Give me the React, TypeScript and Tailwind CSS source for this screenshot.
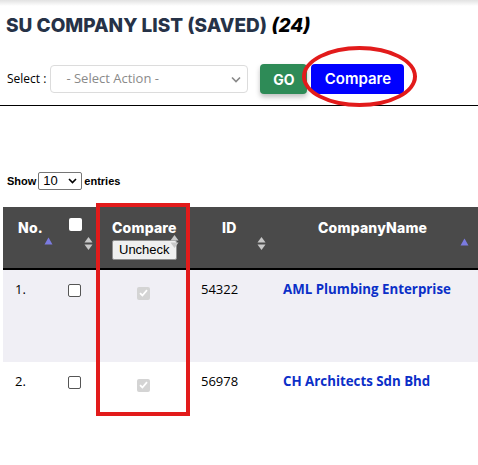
import { FC } from 'react';

const rows = [
  { no: '1.', id: '54322', name: 'AML Plumbing Enterprise', tall: true },
  { no: '2.', id: '56978', name: 'CH Architects Sdn Bhd', tall: false },
];

const SortBoth: FC = () => (
  <svg width="9" height="15" viewBox="0 0 9 15" className="inline-block">
    <path d="M4.5 1 L8.5 6.5 L0.5 6.5 Z" fill="#c8c8c8" />
    <path d="M4.5 14 L8.5 8.5 L0.5 8.5 Z" fill="#c8c8c8" />
  </svg>
);

const SortUp: FC = () => (
  <svg width="9" height="8" viewBox="0 0 9 8" className="inline-block">
    <path d="M4.5 0.5 L8.5 7.5 L0.5 7.5 Z" fill="#7b7be0" />
  </svg>
);

const DisabledCheck: FC = () => (
  <span className="inline-flex h-[13px] w-[13px] items-center justify-center rounded-[2px] bg-[#d4d4d4]">
    <svg width="9" height="8" viewBox="0 0 9 8">
      <path d="M1 4.2 L3.4 6.5 L8 1.2" stroke="#ffffff" strokeWidth="1.8" fill="none" />
    </svg>
  </span>
);

const EmptyCheck: FC = () => (
  <span className="inline-block h-[13px] w-[13px] rounded-[2px] border border-[#555] bg-white" />
);

export default function App() {
  return (
    <div className="relative h-[465px] w-[478px] overflow-hidden bg-white font-['Open_Sans',sans-serif] text-black">
      {/* top shadow */}
      <div className="h-[6px] bg-gradient-to-b from-[#e2e2e2] to-white" />

      {/* Title */}
      <h1 className="mt-[6px] pl-[6px] font-['Inter',sans-serif] text-[19px] leading-[28px] font-extrabold text-[#263247]">
        SU COMPANY LIST (SAVED) <i className="text-black">(24)</i>
      </h1>

      {/* Action row */}
      <div className="mt-[24px] flex items-center pl-[7px]">
        <span className="text-[12px]">Select :</span>
        <div className="ml-[4px] flex h-[28px] w-[198px] items-center justify-between rounded-[4px] border border-[#dcdcdc] pl-[15px] pr-[6px] text-[13px] text-[#8a8a8a]">
          <span>- Select Action -</span>
          <svg width="10" height="7" viewBox="0 0 10 7">
            <path d="M1 1.5 L5 5.5 L9 1.5" stroke="#888" strokeWidth="1.6" fill="none" />
          </svg>
        </div>
        <button className="ml-[12px] h-[30px] w-[47px] rounded-[4px] bg-[#2e8b57] font-['Inter',sans-serif] text-[14px] font-bold text-white shadow-[0_3px_5px_rgba(0,0,0,0.25)]">
          GO
        </button>
        <button className="ml-[4px] h-[30px] w-[93px] rounded-[4px] bg-[#0000ff] font-['Inter',sans-serif] text-[15px] font-semibold text-white">
          Compare
        </button>
      </div>

      <div className="mt-[11px] h-px bg-black" />

      {/* Show entries */}
      <div className="mt-[66px] flex items-center pl-[7px] font-['Liberation_Sans',sans-serif] text-[11px] font-bold">
        <span>Show</span>
        <div className="mx-[2px] flex h-[18px] w-[44px] items-center justify-between rounded-[2px] border border-[#767676] pl-[4px] pr-[4px] text-[13px] font-normal">
          <span>10</span>
          <svg width="9" height="6" viewBox="0 0 9 6">
            <path d="M1 1 L4.5 4.5 L8 1" stroke="#000" strokeWidth="1.6" fill="none" />
          </svg>
        </div>
        <span>entries</span>
      </div>

      {/* Table */}
      <div className="ml-[3px] mt-[17px] w-[500px]">
        <div className="flex h-[63px] border-b-2 border-black bg-[#4a4a4a] font-['Inter',sans-serif] text-[14px] font-extrabold tracking-[0.2px] text-white">
          <div className="flex w-[57px] items-start pl-[15px] pt-[10px]">
            <span>No.</span>
            <span className="ml-[1px] mt-[12px]"><SortUp /></span>
          </div>
          <div className="flex w-[37px] items-start pl-[9px] pt-[11px]">
            <span className="inline-block h-[13px] w-[13px] rounded-[2px] bg-white" />
            <span className="ml-[2px] mt-[13px]"><SortBoth /></span>
          </div>
          <div className="relative w-[92px] pl-[15px] pt-[10px]">
            <div>Compare</div>
            <button className="mt-[1px] h-[20px] rounded-[2px] border border-[#8f8f8f] bg-[#efefef] px-[6px] font-['Liberation_Sans',sans-serif] text-[13px] font-normal leading-[18px] tracking-normal text-black">
              Uncheck
            </button>
            <span className="absolute left-[73px] top-[22px]"><SortBoth /></span>
          </div>
          <div className="flex w-[85px] items-start pl-[33px] pt-[10px]">
            <span>ID</span>
            <span className="ml-[20px] mt-[14px]"><SortBoth /></span>
          </div>
          <div className="flex flex-1 items-start pl-[44px] pt-[10px]">
            <span>CompanyName</span>
            <span className="ml-[33px] mt-[13px]"><SortUp /></span>
          </div>
        </div>

        {rows.map((r) => (
          <div
            key={r.id}
            className={`flex text-[13px] ${r.tall ? 'h-[92px] bg-[#f0eff5]' : 'h-[48px] bg-white'}`}
          >
            <div className="w-[57px] pl-[12px] pt-[10px]">{r.no}</div>
            <div className="w-[37px] pl-[8px] pt-[13px]"><EmptyCheck /></div>
            <div className="w-[92px] pl-[40px] pt-[13px]"><DisabledCheck /></div>
            <div className="w-[85px] pl-[12px] pt-[10px]">{r.id}</div>
            <div className="flex-1 pl-[9px] pt-[10px] text-[13.3px] font-bold text-[#0b2fc8]">{r.name}</div>
          </div>
        ))}
      </div>

      {/* Red annotations */}
      <div className="pointer-events-none absolute left-[302px] top-[46px] h-[61px] w-[115px] rounded-[50%] border-[4px] border-[#e21b1b]" />
      <div className="pointer-events-none absolute left-[96px] top-[203px] h-[213px] w-[94px] border-[4px] border-[#e21b1b]" />
    </div>
  );
}
